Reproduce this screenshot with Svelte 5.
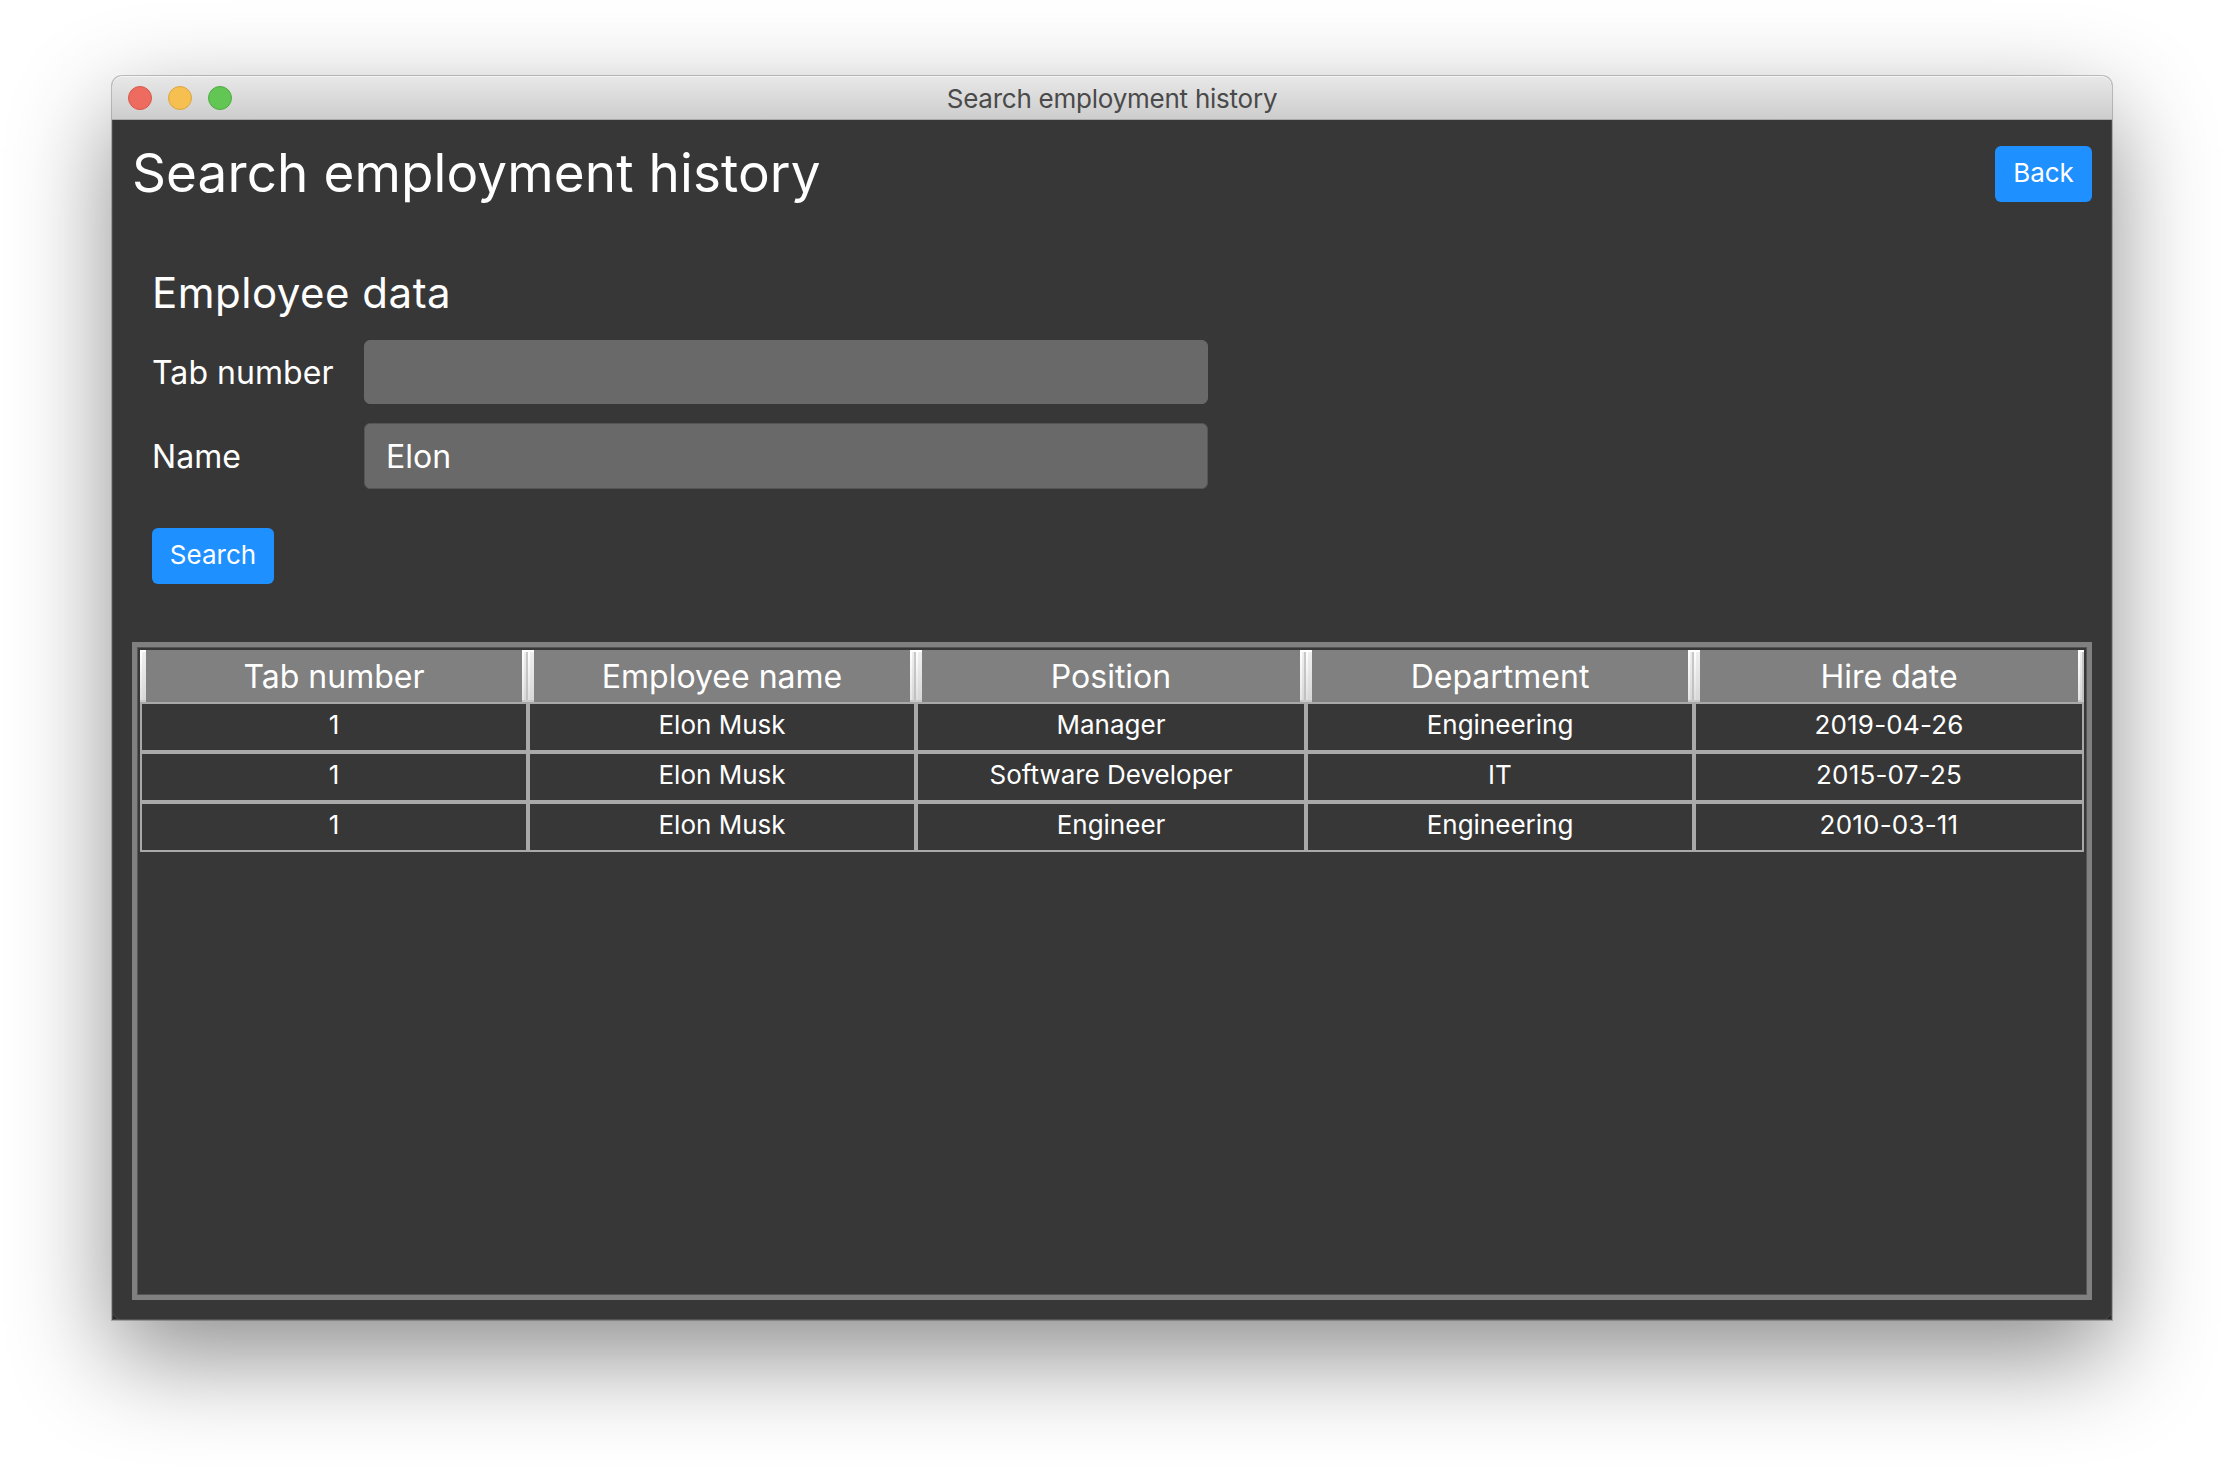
<script>
  const columns = ['Tab number', 'Employee name', 'Position', 'Department', 'Hire date'];
  const rows = [
    ['1', 'Elon Musk', 'Manager', 'Engineering', '2019-04-26'],
    ['1', 'Elon Musk', 'Software Developer', 'IT', '2015-07-25'],
    ['1', 'Elon Musk', 'Engineer', 'Engineering', '2010-03-11']
  ];
  let tabNumber = $state('');
  let name = $state('Elon');
</script>

<main class="desktop">
  <section class="window">
    <header class="titlebar">
      <div class="lights">
        <i class="light close"></i>
        <i class="light minimise"></i>
        <i class="light zoom"></i>
      </div>
      <span class="caption">Search employment history</span>
    </header>
    <div class="content">
      <div class="top">
        <h1>Search employment history</h1>
        <button type="button" class="back">Back</button>
      </div>
      <form class="form">
        <h2>Employee data</h2>
        <label><span>Tab number</span><input class="plain" type="text" bind:value={tabNumber} /></label>
        <label><span>Name</span><input type="text" bind:value={name} /></label>
        <button type="button" class="search">Search</button>
      </form>
      <div class="frame">
        <div class="row head">
          {#each columns as column}
            <div class="th"><i class="bevel left"></i><span>{column}</span><i class="bevel right"></i></div>
          {/each}
        </div>
        {#each rows as row}
          <div class="row">
            {#each row as cell, i}
              <div class="td" class:date={i === 4}>{cell}</div>
            {/each}
          </div>
        {/each}
      </div>
    </div>
  </section>
</main>

<style>
  :global(body) {
    background: #fff;
  }
  .desktop {
    box-sizing: border-box;
    width: 2224px;
    height: 1468px;
    padding: 76px 112px 148px;
    overflow: hidden;
    font-family: Inter, sans-serif;
    color: #fff;
  }
  .window {
    display: flex;
    flex-direction: column;
    height: 1244px;
    border-radius: 10px 10px 0 0;
    background: #373737;
    box-shadow: 0 0 0 1px rgba(0, 0, 0, 0.22), 0 36px 100px rgba(0, 0, 0, 0.45);
  }
  .titlebar {
    box-sizing: border-box;
    display: grid;
    grid-template-columns: 1fr auto 1fr;
    align-items: center;
    height: 44px;
    padding: 1px 16px 0;
    border-radius: 10px 10px 0 0;
    border-bottom: 1px solid #a9a9a9;
    background: linear-gradient(#e8e8e8, #cdcdcd);
    box-shadow: inset 0 1px #f5f5f5;
  }
  .lights {
    display: flex;
    gap: 16px;
  }
  .light {
    box-sizing: border-box;
    width: 24px;
    height: 24px;
    border: 1px solid transparent;
    border-radius: 50%;
  }
  .close {
    background: #ed6b5f;
    border-color: #d8574c;
  }
  .minimise {
    background: #f5c04f;
    border-color: #dba640;
  }
  .zoom {
    background: #62c655;
    border-color: #50ab42;
  }
  .caption {
    padding-top: 1px;
    font-size: 26px;
    line-height: 32px;
    letter-spacing: -0.24px;
    color: #4a4a4a;
  }
  .content {
    box-sizing: border-box;
    flex: 1;
    display: flex;
    flex-direction: column;
    padding: 26px 20px 20px;
    /* shaded notches in both bottom corners */
    background:
      radial-gradient(circle at 10px 0, transparent 9px, #4a4a4a 9.5px, #262626 10.5px) left bottom / 10px 10px no-repeat,
      radial-gradient(circle at 0 0, transparent 9px, #4a4a4a 9.5px, #262626 10.5px) right bottom / 10px 10px no-repeat;
    box-shadow: inset 1px 0 #4c4c4c, inset -1px 0 #4c4c4c, inset 0 -1px #555;
  }
  .top {
    display: flex;
    justify-content: space-between;
    height: 56px;
  }
  h1,
  h2 {
    margin: 0;
    font-weight: 400;
    white-space: nowrap;
  }
  h1 {
    font-size: 53px;
    line-height: 54px;
    letter-spacing: 0.1px;
  }
  button {
    box-sizing: border-box;
    height: 56px;
    padding: 0;
    border: 0;
    border-radius: 6px;
    background: #1e90ff;
    color: #fff;
    font: 26px/54px Inter, sans-serif;
    padding-bottom: 2px;
  }
  .back {
    width: 97px;
  }
  .form {
    box-sizing: border-box;
    display: flex;
    flex-direction: column;
    height: 440px;
    padding: 64px 20px 0;
  }
  h2 {
    height: 74px;
    font-size: 42px;
    line-height: 54px;
    letter-spacing: 0.5px;
  }
  label {
    display: flex;
    align-items: center;
    height: 64px;
    margin-bottom: 20px;
    font-size: 32px;
  }
  label span {
    width: 212px;
    letter-spacing: 0.05px;
  }
  input {
    box-sizing: border-box;
    width: 844px;
    height: 66px;
    padding: 0 21px;
    border: 1px solid #555;
    border-radius: 6px;
    outline: none;
    background: #696969;
    color: #fff;
    font: 32px Inter, sans-serif;
  }
  .plain {
    height: 64px;
    border-color: #696969;
  }
  .search {
    width: 122px;
    margin-top: 20px;
  }
  .frame {
    box-sizing: border-box;
    height: 658px;
    padding: 3px;
    border: 5px solid #808080;
    box-shadow: inset 0 0 0 1px #555;
  }
  .row {
    display: grid;
    grid-template-columns: 388px 388px 390px 388px 390px;
    height: 50px;
    font-size: 26px;
  }
  .head {
    height: 52px;
    font-size: 32px;
    background: #808080;
  }
  .th {
    display: flex;
    justify-content: space-between;
    align-items: center;
  }
  .td {
    box-sizing: border-box;
    border: 2px solid #a9a9a9;
    text-align: center;
    line-height: 41px;
  }
  .date {
    letter-spacing: 0.2px;
  }
  .bevel {
    box-sizing: border-box;
    width: 6px;
    height: 52px;
    border-top: 2px solid #fff;
    border-bottom: 2px solid #c8c8c8;
  }
  .left {
    background:
      linear-gradient(#fff, #dedede) left / 2px 100% no-repeat,
      linear-gradient(#efefef, #d8d8d8);
  }
  .right {
    background:
      linear-gradient(#fff, #e6e6e6) left / 2px 100% no-repeat,
      linear-gradient(#c8c8c8, #c0c0c0) right / 2px 100% no-repeat,
      linear-gradient(#efefef, #d8d8d8);
  }
</style>
